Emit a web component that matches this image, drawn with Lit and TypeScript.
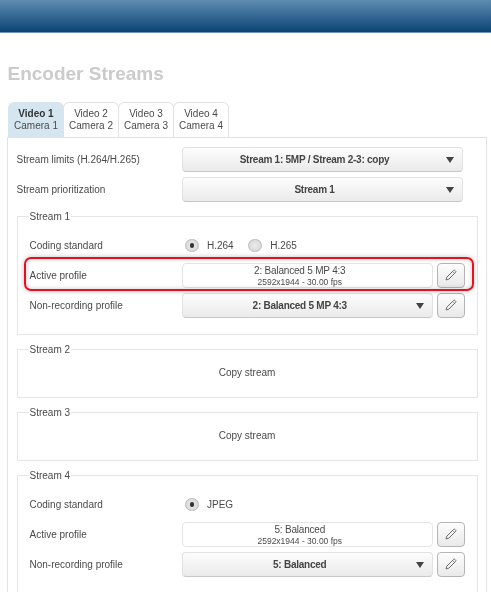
import { LitElement, html, css } from "lit";
import { customElement } from "lit/decorators.js";

const pencil = html`<svg width="14" height="14" viewBox="0 0 14 14" fill="none" stroke="#6e6e6e" stroke-width="1"><path d="M2.8 9.2 9.6 2.4 a.9.9 0 0 1 1.3 0 l.7.7 a.9.9 0 0 1 0 1.3 L4.8 11.2 2 12 Z"/><path d="M8.6 3.4 10.6 5.4" stroke-width=".8"/></svg>`;

@customElement("app-root")
export class AppRoot extends LitElement {
  static styles = css`
    :host { display: block; width: 491px; height: 592px; overflow: hidden; background: #fff; font-family: "Liberation Sans", Arial, sans-serif; font-size: 10px; color: #4a4a4a; filter: blur(.3px); }
    .top { height: 32px; border-bottom: 1px solid #6d93b3; background: linear-gradient(#5f8cb2, #0a4473); }
    h1 { margin: 0; padding: 29px 0 0 7.5px; height: 40px; font-size: 19px; line-height: 24px; font-weight: bold; color: #cbcbcb; }
    .tabs { display: flex; margin-left: 8px; height: 35px; }
    .tab { flex: none; width: 56px; margin-right: -1px; box-sizing: border-box; border: 1px solid #e2e2e2; border-bottom: none; border-radius: 6px 6px 0 0; text-align: center; line-height: 12px; padding-top: 5px; background: #fff; }
    .tab:first-child { background: #d6e6f1; border-color: #d6e6f1 #e2e2e2 #d6e6f1 #d6e6f1; }
    .tab b { color: #333; }
    .panel { margin-left: 7px; width: 479.5px; box-sizing: border-box; border: 1.5px solid #e2e2e2; border-right: 1px solid #e2e2e2; border-bottom: none; padding: 8.5px 8.5px 0 8.5px; height: 460px; }
    .row { display: flex; align-items: center; height: 25px; margin-bottom: 5px; }
    .row:last-child { margin-bottom: 0; }
    .top-rows .label { width: 165px; flex: none; }
    .fs .label { width: 152.5px; flex: none; }
    .select { box-sizing: border-box; height: 25px; padding-right: 15px; border: 1px solid #e2e2e2; border-bottom-color: #c8c8c8; border-radius: 4px; background: linear-gradient(#fdfdfd, #eaeaea); display: flex; align-items: center; justify-content: center; position: relative; font-weight: bold; letter-spacing: -.25px; color: #444; }
    .top-rows .select { width: 281px; }
    .fs .select, .fs .value { width: 250.5px; flex: none; }
    .arrow { position: absolute; right: 8px; top: 9px; width: 0; height: 0; border-left: 4px solid transparent; border-right: 4px solid transparent; border-top: 6px solid #444; }
    .value { box-sizing: border-box; height: 25px; padding: 1.5px 15px 0 0; border: 1px solid #e4e4e4; border-radius: 4px; background: #fff; text-align: center; line-height: 11px; letter-spacing: -.2px; }
    .value small { display: block; margin-top: .5px; font-size: 8.5px; line-height: 10px; letter-spacing: 0; }
    .edit { box-sizing: border-box; margin-left: 4.5px; width: 27.5px; height: 25px; border: 1px solid #b5b5b5; border-radius: 4px; background: linear-gradient(#fdfdfd, #e9e9e9); display: flex; align-items: center; justify-content: center; }
    .fs { position: relative; box-sizing: border-box; width: 461px; border: 1px solid #e6e6e6; margin-top: 14px; margin-bottom: 14px; padding: 18px 12px 0 12px; }
    .legend { position: absolute; left: 11px; top: -6px; background: #fff; padding: 0 1px; line-height: 12px; }
    .copy { height: 49px; padding: 0; text-align: center; line-height: 45px; }
    .s1 { height: 119px; }
    .s4 { height: 140px; }
    .radios { display: flex; align-items: center; margin-left: 3px; }
    .radio { width: 13.5px; height: 13.5px; box-sizing: border-box; border-radius: 50%; border: 1px solid #bbb; background: radial-gradient(#ececec, #d2d2d2); margin-right: 8.5px; display: flex; align-items: center; justify-content: center; }
    .radio.on::after { content: ""; width: 4.5px; height: 4.5px; border-radius: 50%; background: #333; }
    .radios span { margin-right: 14.5px; }
    .row.coding { height: 22px; margin-bottom: 6px; }
    .hl { position: absolute; left: 6px; top: 40px; width: 450px; height: 34px; box-sizing: border-box; border: 2px solid #e8101c; border-radius: 7px; box-shadow: 0 0 5px rgba(0,0,0,.25), inset 0 0 5px rgba(0,0,0,.2); pointer-events: none; }
  `;

  private prof(a: string, b: string) {
    return html`<div class="row"><div class="label">Active profile</div><div class="value">${a}<small>${b}</small></div><div class="edit">${pencil}</div></div>`;
  }
  private nonrec(a: string) {
    return html`<div class="row"><div class="label">Non-recording profile</div><div class="select">${a}<i class="arrow"></i></div><div class="edit">${pencil}</div></div>`;
  }

  render() {
    const tabs = [1, 2, 3, 4];
    return html`
      <div class="top"></div>
      <h1>Encoder Streams</h1>
      <div class="tabs">
        ${tabs.map((n) => html`<div class="tab">${n === 1 ? html`<b>Video 1</b>` : `Video ${n}`}<br />Camera ${n}</div>`)}
      </div>
      <div class="panel">
        <div class="top-rows">
          <div class="row"><div class="label">Stream limits (H.264/H.265)</div><div class="select">Stream 1: 5MP / Stream 2-3: copy<i class="arrow"></i></div></div>
          <div class="row"><div class="label">Stream prioritization</div><div class="select">Stream 1<i class="arrow"></i></div></div>
        </div>
        <div class="fs s1">
          <div class="legend">Stream 1</div>
          <div class="row coding"><div class="label">Coding standard</div><div class="radios"><div class="radio on"></div><span>H.264</span><div class="radio"></div><span>H.265</span></div></div>
          ${this.prof("2: Balanced 5 MP 4:3", "2592x1944 - 30.00 fps")}
          ${this.nonrec("2: Balanced 5 MP 4:3")}
          <div class="hl"></div>
        </div>
        <div class="fs copy"><div class="legend">Stream 2</div>Copy stream</div>
        <div class="fs copy"><div class="legend">Stream 3</div>Copy stream</div>
        <div class="fs s4">
          <div class="legend">Stream 4</div>
          <div class="row coding"><div class="label">Coding standard</div><div class="radios"><div class="radio on"></div><span>JPEG</span></div></div>
          ${this.prof("5: Balanced", "2592x1944 - 30.00 fps")}
          ${this.nonrec("5: Balanced")}
        </div>
      </div>
    `;
  }
}
